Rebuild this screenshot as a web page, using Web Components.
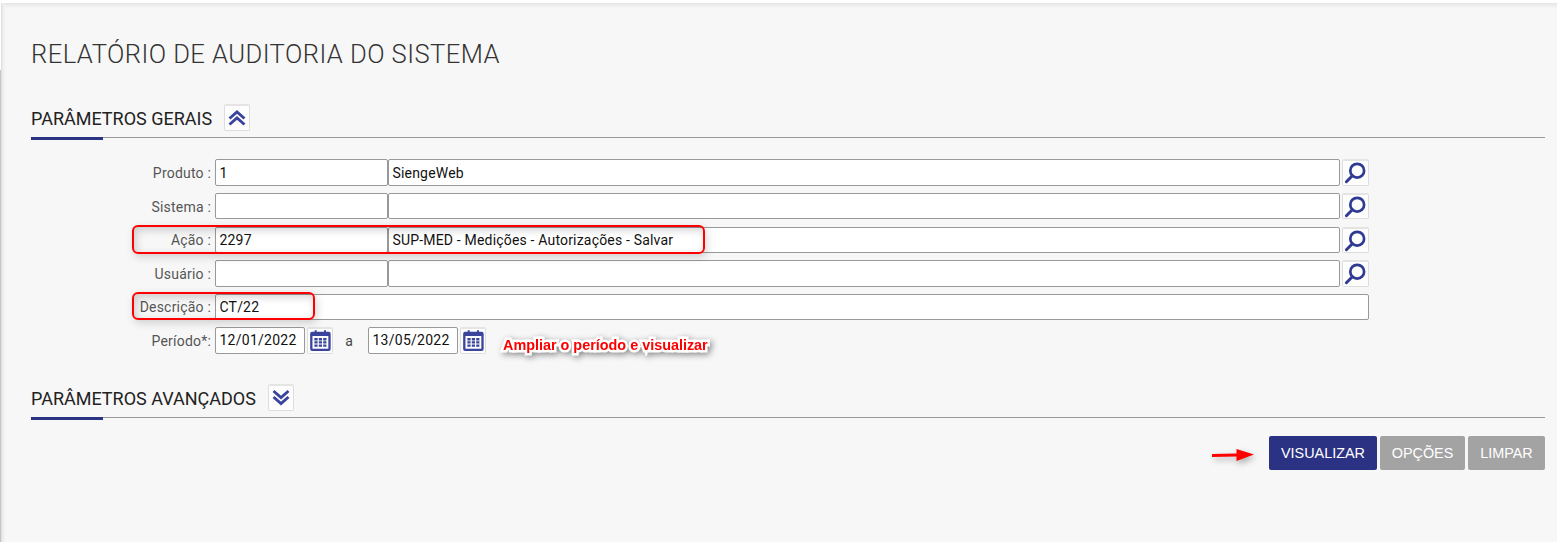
<!DOCTYPE html>
<html lang="pt-BR">
<head>
<meta charset="utf-8">
<title>Relatório de Auditoria do Sistema</title>
<style>
  body {
    margin: 0;
    height: 542px;
    overflow: hidden;
    background: #fff;
    font-family: Roboto, "Liberation Sans", sans-serif;
  }
</style>
</head>
<body>
<report-page heading="RELATÓRIO DE AUDITORIA DO SISTEMA">
  <param-section heading="PARÂMETROS GERAIS" icon="up">
    <form-row label="Produto :" style="--h: 27px">
      <text-field style="--w: 173px">1</text-field>
      <text-field style="--w: 952px">SiengeWeb</text-field>
      <icon-button name="search"></icon-button>
    </form-row>
    <form-row label="Sistema :" style="--h: 26px">
      <text-field style="--w: 173px"></text-field>
      <text-field style="--w: 952px"></text-field>
      <icon-button name="search"></icon-button>
    </form-row>
    <form-row label="Ação :" style="--h: 26px; --line: 24px; --label-line: 26px; margin-top: 1px">
      <text-field style="--w: 173px">2297</text-field>
      <text-field style="--w: 952px">SUP-MED - Medições - Autorizações - Salvar</text-field>
      <icon-button name="search"></icon-button>
    </form-row>
    <form-row label="Usuário :" style="--h: 27px">
      <text-field style="--w: 173px"></text-field>
      <text-field style="--w: 952px"></text-field>
      <icon-button name="search"></icon-button>
    </form-row>
    <form-row label="Descrição :" style="--h: 26px; --line: 24px; --label-line: 26px">
      <text-field style="--w: 1154px">CT/22</text-field>
    </form-row>
    <form-row label="Período*:" style="--h: 27px; --line: 25px">
      <date-field value="12/01/2022"></date-field>
      <span class="sep">a</span>
      <date-field value="13/05/2022"></date-field>
    </form-row>
  </param-section>
  <param-section heading="PARÂMETROS AVANÇADOS" icon="down"></param-section>
  <action-button slot="actions" primary style="--w: 108px">VISUALIZAR</action-button>
  <action-button slot="actions" style="--w: 85px">OPÇÕES</action-button>
  <action-button slot="actions" style="--w: 77px">LIMPAR</action-button>
  <mark-box slot="marks" style="left: 131.5px; top: 225px; width: 573px; height: 29px"></mark-box>
  <mark-box slot="marks" style="left: 131.5px; top: 292px; width: 183px; height: 28px"></mark-box>
  <mark-note slot="marks" style="left: 503px; top: 337px">Ampliar o período e visualizar</mark-note>
  <mark-arrow slot="marks" style="left: 1212px; top: 447px"></mark-arrow>
</report-page>

<script>
  class ReportPage extends HTMLElement {
    connectedCallback() {
      this.attachShadow({ mode: 'open' });
      this.shadowRoot.innerHTML = `
        <style>
          :host {
            display: block;
            position: relative;
            height: 542px;
            box-sizing: border-box;
            padding-left: 1px;
            background: linear-gradient(#fff 70px, #c6c6c6 70px);
          }
          .top {
            height: 3px;
            background: #fff;
          }
          main {
            height: 539px;
            box-sizing: border-box;
            padding: 34px 12px 0 30px;
            background:
              linear-gradient(90deg, #dcdcdc, #efefef 2px, #f7f7f700 5px),
              linear-gradient(#e4e4e4, #f0f0f0 3px, #f7f7f7 6px);
          }
          h1 {
            margin: 0 0 31px;
            font-size: 25.6px;
            line-height: 34px;
            font-weight: 300;
            letter-spacing: 0.43px;
            color: #333;
            white-space: nowrap;
          }
          .actions {
            display: flex;
            justify-content: flex-end;
            gap: 3px;
            padding-top: 16px;
          }
        </style>
        <div class="top"></div>
        <main>
          <h1>${this.getAttribute('heading')}</h1>
          <slot></slot>
          <div class="actions"><slot name="actions"></slot></div>
        </main>
        <slot name="marks"></slot>
      `;
    }
  }
  customElements.define('report-page', ReportPage);

  class ParamSection extends HTMLElement {
    connectedCallback() {
      this.attachShadow({ mode: 'open' });
      this.shadowRoot.innerHTML = `
        <style>
          :host { display: block; }
          header {
            display: flex;
            align-items: flex-start;
            gap: 12px;
            height: 35px;
            padding-top: 2px;
            box-sizing: border-box;
          }
          h2 {
            margin: 4px 0 0;
            font-size: 18px;
            line-height: 21px;
            font-weight: 400;
            color: #222;
            white-space: nowrap;
          }
          .rule {
            height: 3px;
            background:
              linear-gradient(#2b3483, #2b3483) 0 0 / 72px 3px no-repeat,
              linear-gradient(#999, #999) 0 0 / 100% 1px no-repeat;
          }
          .body {
            display: flex;
            flex-direction: column;
            gap: 7px;
          }
          .body.filled { padding: 19px 0 28px; }
        </style>
        <header>
          <h2>${this.getAttribute('heading')}</h2>
          <icon-button name="${this.getAttribute('icon')}"></icon-button>
        </header>
        <div class="rule"></div>
        <div class="body ${this.children.length ? 'filled' : ''}"><slot></slot></div>
      `;
    }
  }
  customElements.define('param-section', ParamSection);

  class FormRow extends HTMLElement {
    connectedCallback() {
      this.attachShadow({ mode: 'open' });
      this.shadowRoot.innerHTML = `
        <style>
          :host {
            display: flex;
            height: var(--h, 27px);
            --field-h: var(--h, 27px);
          }
          label {
            width: 180px;
            margin-right: 4px;
            text-align: right;
            font-size: 14px;
            line-height: var(--label-line, 28px);
            letter-spacing: 0.2px;
            color: #555;
            white-space: nowrap;
          }
          ::slotted(icon-button) {
            --btn-w: 27px;
            margin-left: 2px;
          }
          ::slotted(.sep) {
            width: 32px;
            padding-right: 3px;
            text-align: center;
            font-size: 14px;
            line-height: 28px;
            color: #444;
          }
        </style>
        <label>${this.getAttribute('label')}</label>
        <slot></slot>
      `;
    }
  }
  customElements.define('form-row', FormRow);

  class TextField extends HTMLElement {
    connectedCallback() {
      this.attachShadow({ mode: 'open' });
      this.shadowRoot.innerHTML = `
        <style>
          :host {
            display: block;
            box-sizing: border-box;
            width: var(--w, 90px);
            height: var(--field-h, 27px);
            padding-left: 3.5px;
            border: 1px solid #999;
            border-radius: 2px;
            background: #fff;
            font-size: 14px;
            line-height: var(--line, 26px);
            letter-spacing: var(--spacing, 0.18px);
            color: #111;
            white-space: nowrap;
          }
        </style>
        <slot></slot>
      `;
    }
  }
  customElements.define('text-field', TextField);

  class DateField extends HTMLElement {
    connectedCallback() {
      this.attachShadow({ mode: 'open' });
      this.shadowRoot.innerHTML = `
        <style>
          :host {
            display: flex;
            gap: 2px;
            --spacing: 0.25px;
          }
        </style>
        <text-field>${this.getAttribute('value')}</text-field>
        <icon-button name="calendar"></icon-button>
      `;
    }
  }
  customElements.define('date-field', DateField);

  const ICONS = {
    up: `<g fill="none" stroke="#3a449c" stroke-width="2.9">
        <path d="M5.5 14.5 13 8l7.5 6.5M5.5 20.5 13 14l7.5 6.5"/></g>`,
    down: `<g fill="none" stroke="#3a449c" stroke-width="2.9">
        <path d="M5.5 7 13 13.5l7.5-6.5M5.5 13 13 19.5l7.5-6.5"/></g>`,
    search: `<g fill="none" stroke="#2f3a93">
        <circle cx="15.2" cy="11.7" r="6.9" stroke-width="2.7"/>
        <path d="M10.3 16.8 4.4 22.7" stroke-width="3" stroke-linecap="round"/></g>`,
    calendar: `<g stroke="#3a449c" fill="none">
        <rect x="4.3" y="5.9" width="18.2" height="17" rx="0.8" stroke-width="2.3"/>
        <path d="M4 7h19" stroke-width="4"/>
        <path d="M8.7 3.3v4M18 3.3v4" stroke-width="2"/>
        <path d="M7.4 12.2h12.2M7.4 15.4h12.2M7.4 18.6h12.2" stroke-width="2.4" stroke-dasharray="3.2 1.2"/></g>`
  };

  class IconButton extends HTMLElement {
    connectedCallback() {
      this.attachShadow({ mode: 'open' });
      this.shadowRoot.innerHTML = `
        <style>
          :host {
            display: block;
            flex: none;
            box-sizing: border-box;
            width: var(--btn-w, 26px);
            height: var(--field-h, 27px);
            border: 1px solid #ddd;
            border-top: 2px solid #e4e4e4;
            border-radius: 2px;
            background: #fdfdfd;
          }
          svg { display: block; margin: -2px 0 0 -1px; }
        </style>
        <svg width="26" height="26" viewBox="0 0 26 26">${ICONS[this.getAttribute('name')]}</svg>
      `;
    }
  }
  customElements.define('icon-button', IconButton);

  class ActionButton extends HTMLElement {
    connectedCallback() {
      this.attachShadow({ mode: 'open' });
      this.shadowRoot.innerHTML = `
        <style>
          :host {
            display: block;
            width: var(--w);
            height: 34px;
            border-radius: 2px;
            background: #a3a3a3;
            color: #fff;
            font: 14.4px/34px "Liberation Sans", Arial, sans-serif;
            text-align: center;
            white-space: nowrap;
          }
          :host([primary]) { background: #2b3283; }
        </style>
        <slot></slot>
      `;
    }
  }
  customElements.define('action-button', ActionButton);

  // red annotations lying over the form
  class MarkBox extends HTMLElement {
    connectedCallback() {
      this.attachShadow({ mode: 'open' });
      this.shadowRoot.innerHTML = `
        <style>
          :host {
            display: block;
            position: absolute;
            box-sizing: border-box;
            border: 2px solid #ff0000;
            border-radius: 6px;
            box-shadow: 2px 3px 8px rgba(0, 0, 0, 0.16), inset 2px 3px 8px rgba(0, 0, 0, 0.18);
          }
        </style>
      `;
    }
  }
  customElements.define('mark-box', MarkBox);

  class MarkNote extends HTMLElement {
    connectedCallback() {
      this.attachShadow({ mode: 'open' });
      this.shadowRoot.innerHTML = `
        <style>
          :host {
            display: block;
            position: absolute;
            font: bold 14.4px/17px "Liberation Sans", Arial, sans-serif;
            color: #f00;
            white-space: nowrap;
            -webkit-text-stroke: 5px #fff;
            stroke-linejoin: round;
            paint-order: stroke fill;
            filter: drop-shadow(2px 2px 3px rgba(0, 0, 0, 0.45));
          }
        </style>
        <slot></slot>
      `;
    }
  }
  customElements.define('mark-note', MarkNote);

  class MarkArrow extends HTMLElement {
    connectedCallback() {
      this.attachShadow({ mode: 'open' });
      this.shadowRoot.innerHTML = `
        <style>
          :host {
            display: block;
            position: absolute;
            filter: drop-shadow(2px 3px 3px rgba(0, 0, 0, 0.3));
          }
          svg { display: block; }
        </style>
        <svg width="44" height="16" viewBox="0 0 44 16">
          <path fill="#f00" d="M0 7 24.5 6.4V2L42 7.5 24.500 14V9.600L0 9.900z"/>
        </svg>
      `;
    }
  }
  customElements.define('mark-arrow', MarkArrow);
</script>
</body>
</html>
